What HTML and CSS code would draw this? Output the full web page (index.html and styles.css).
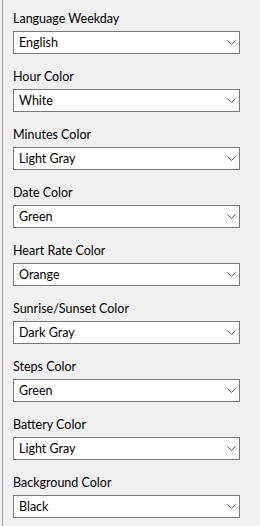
FILE: index.html
```html
<!DOCTYPE html>
<html lang="en">
<head>
    <meta charset="UTF-8">
    <title>Watch Face Settings</title>
    <link rel="stylesheet" href="styles.css">
</head>
<body>
    <div class="panel">
        <div class="field">
            <label for="lang">Language Weekday</label>
            <div class="combo">
                <select id="lang"><option>English</option></select>
                <svg class="chev" width="9" height="5" viewBox="0 0 9 5"><path d="M0.5 0.5 L4.5 4.5 L8.5 0.5" fill="none" stroke="#5d5d5d" stroke-width="1"/></svg>
            </div>
        </div>
        <div class="field">
            <label for="hour">Hour Color</label>
            <div class="combo">
                <select id="hour"><option>White</option></select>
                <svg class="chev" width="9" height="5" viewBox="0 0 9 5"><path d="M0.5 0.5 L4.5 4.5 L8.5 0.5" fill="none" stroke="#5d5d5d" stroke-width="1"/></svg>
            </div>
        </div>
        <div class="field">
            <label for="minutes">Minutes Color</label>
            <div class="combo">
                <select id="minutes"><option>Light Gray</option></select>
                <svg class="chev" width="9" height="5" viewBox="0 0 9 5"><path d="M0.5 0.5 L4.5 4.5 L8.5 0.5" fill="none" stroke="#5d5d5d" stroke-width="1"/></svg>
            </div>
        </div>
        <div class="field">
            <label for="date">Date Color</label>
            <div class="combo">
                <select id="date"><option>Green</option></select>
                <svg class="chev" width="9" height="5" viewBox="0 0 9 5"><path d="M0.5 0.5 L4.5 4.5 L8.5 0.5" fill="none" stroke="#5d5d5d" stroke-width="1"/></svg>
            </div>
        </div>
        <div class="field">
            <label for="heart">Heart Rate Color</label>
            <div class="combo">
                <select id="heart"><option>Orange</option></select>
                <svg class="chev" width="9" height="5" viewBox="0 0 9 5"><path d="M0.5 0.5 L4.5 4.5 L8.5 0.5" fill="none" stroke="#5d5d5d" stroke-width="1"/></svg>
            </div>
        </div>
        <div class="field">
            <label for="sun">Sunrise/Sunset Color</label>
            <div class="combo">
                <select id="sun"><option>Dark Gray</option></select>
                <svg class="chev" width="9" height="5" viewBox="0 0 9 5"><path d="M0.5 0.5 L4.5 4.5 L8.5 0.5" fill="none" stroke="#5d5d5d" stroke-width="1"/></svg>
            </div>
        </div>
        <div class="field">
            <label for="steps">Steps Color</label>
            <div class="combo">
                <select id="steps"><option>Green</option></select>
                <svg class="chev" width="9" height="5" viewBox="0 0 9 5"><path d="M0.5 0.5 L4.5 4.5 L8.5 0.5" fill="none" stroke="#5d5d5d" stroke-width="1"/></svg>
            </div>
        </div>
        <div class="field">
            <label for="battery">Battery Color</label>
            <div class="combo">
                <select id="battery"><option>Light Gray</option></select>
                <svg class="chev" width="9" height="5" viewBox="0 0 9 5"><path d="M0.5 0.5 L4.5 4.5 L8.5 0.5" fill="none" stroke="#5d5d5d" stroke-width="1"/></svg>
            </div>
        </div>
        <div class="field">
            <label for="bg">Background Color</label>
            <div class="combo">
                <select id="bg"><option>Black</option></select>
                <svg class="chev" width="9" height="5" viewBox="0 0 9 5"><path d="M0.5 0.5 L4.5 4.5 L8.5 0.5" fill="none" stroke="#5d5d5d" stroke-width="1"/></svg>
            </div>
        </div>
    </div>
</body>
</html>
```

FILE: styles.css
```css
html, body {
    height: 100%;
}
body {
    margin: 0;
    background-color: #f0f0f0;
    font-family: Lato, "Noto Sans", sans-serif;
    font-size: 12.5px;
    color: #000;
}
.panel {
    margin-left: 2px;
    min-height: 100%;
    box-sizing: border-box;
    border-left: 1px solid #a0a0a0;
    padding: 10px 0 0 10px;
}
.field {
    display: flex;
    flex-direction: column;
    gap: 5px;
    width: 227px;
    margin-bottom: 14px;
}
label {
    display: block;
    height: 16px;
    line-height: 18px;
}
.combo {
    position: relative;
    height: 23px;
}
select {
    appearance: none;
    -webkit-appearance: none;
    width: 100%;
    height: 23px;
    margin: 0;
    padding: 0 0 0 5px;
    border: 1px solid #7a7a7a;
    border-radius: 0;
    background-color: #fff;
    font-family: inherit;
    font-size: 12.5px;
    color: #000;
    outline: none;
}
.chev {
    position: absolute;
    right: 4px;
    top: 9px;
    pointer-events: none;
}
```
